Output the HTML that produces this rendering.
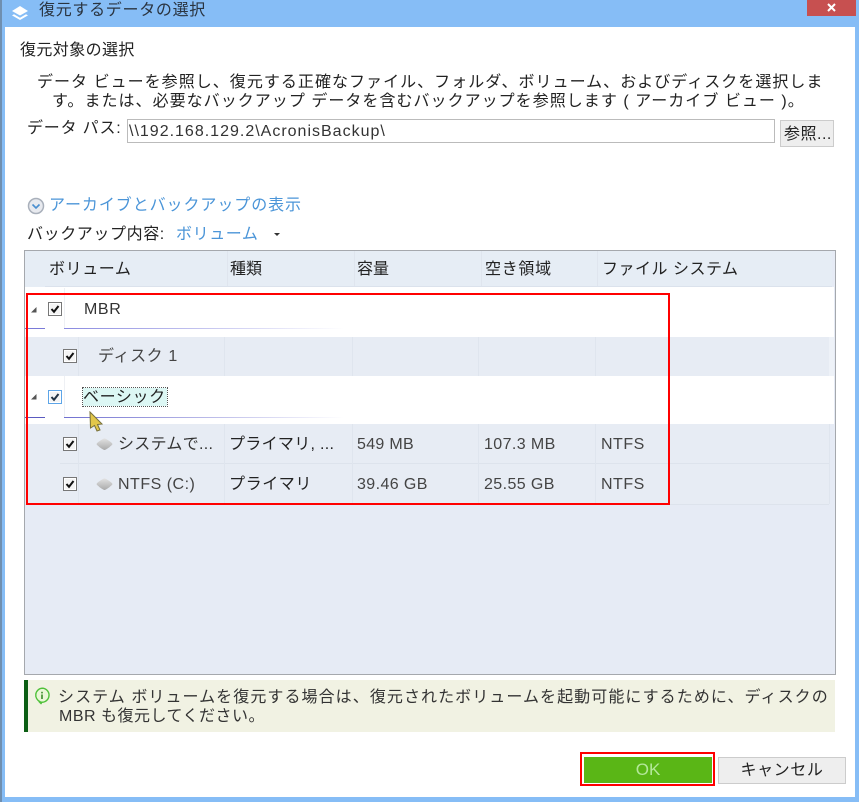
<!DOCTYPE html>
<html lang="ja">
<head>
<meta charset="utf-8">
<style>
html,body{margin:0;padding:0;}
body{position:relative;width:859px;height:802px;overflow:hidden;background:#86bdf6;font-family:"Liberation Sans","Noto Sans CJK JP",sans-serif;color:#222;}
div,span{position:absolute;white-space:nowrap;}
.t{font-size:16px;line-height:20px;}
.vl{width:1px;background:#dfe5ee;}
.hl{height:1px;background:#dde3ec;}
.cb{width:12px;height:12px;border:1px solid #777;background:#f4f4f4;box-shadow:inset 0 0 0 1px #fff;}
.cb svg{position:absolute;left:0;top:0;}
</style>
</head>
<body>
<!-- window -->
<div style="left:0;top:0;width:2px;height:802px;background:#6f8fb0"></div>
<div style="left:5px;top:27px;width:850px;height:771px;background:#fff"></div>
<svg style="position:absolute;left:11px;top:5px" width="18" height="16" viewBox="0 0 18 16"><path d="M9 1L17 6 9 10.5 1 6z" fill="#fff"/><path d="M3 9.2L9 12.8 15 9.2 17 10.4 9 15 1 10.4z" fill="#fff"/></svg>
<div class="t" style="left:39px;top:1px;letter-spacing:.7px;color:#2a3440">復元するデータの選択</div>
<div style="left:807px;top:0;width:49px;height:16px;background:#c75050"></div>
<svg style="position:absolute;left:827px;top:3px" width="9" height="9" viewBox="0 0 9 9"><path d="M1 1L8 8M8 1L1 8" stroke="#fff" stroke-width="2"/></svg>

<div class="t" style="left:20px;top:41px;letter-spacing:.4px">復元対象の選択</div>
<div class="t" style="left:37px;top:73px;letter-spacing:1.03px">データ ビューを参照し、復元する正確なファイル、フォルダ、ボリューム、およびディスクを選択しま</div>
<div class="t" style="left:52px;top:92px;letter-spacing:1.03px">す。または、必要なバックアップ データを含むバックアップを参照します ( アーカイブ ビュー )。</div>
<div class="t" style="left:27px;top:119px;letter-spacing:.8px">データ パス:</div>
<div style="left:127px;top:119px;width:646px;height:22px;border:1px solid #bbb;background:#fff"></div>
<div class="t" style="left:129px;top:122px;letter-spacing:1px;color:#333">\\192.168.129.2\AcronisBackup\</div>
<div style="left:780px;top:120px;width:52px;height:25px;border:1px solid #ccc;background:#eee"></div>
<div class="t" style="left:784px;top:125px;letter-spacing:.5px">参照...</div>

<svg style="position:absolute;left:27px;top:197px" width="18" height="18" viewBox="0 0 18 18"><circle cx="9" cy="9" r="7.5" fill="#e8eaef" stroke="#a9b0bb" stroke-width="1.5"/><path d="M5.5 7.5L9 11 12.5 7.5" fill="none" stroke="#4a8fd0" stroke-width="1.6"/></svg>
<div class="t" style="left:49px;top:196px;color:#4b95d8;letter-spacing:.93px">アーカイブとバックアップの表示</div>
<div class="t" style="left:27px;top:225px;letter-spacing:.6px">バックアップ内容:</div>
<div class="t" style="left:176px;top:225px;color:#4b95d8;letter-spacing:.6px">ボリューム</div>
<div style="left:274px;top:233px;width:0;height:0;border-left:3px solid transparent;border-right:3px solid transparent;border-top:3px solid #333"></div>

<!-- table -->
<div style="left:24px;top:250px;width:810px;height:423px;border:1px solid #a5a8ad;background:#e6ebf5"></div>
<div style="left:25px;top:251px;width:807px;height:36px;background:#e6edf5"></div>
<div style="left:45px;top:286px;width:787px;height:1px;background:#dbe2ec"></div>
<div class="vl" style="left:227px;top:251px;height:35px"></div>
<div class="vl" style="left:354px;top:251px;height:35px"></div>
<div class="vl" style="left:481px;top:251px;height:35px"></div>
<div class="vl" style="left:597px;top:251px;height:35px"></div>
<div class="t" style="left:49px;top:260px;letter-spacing:.6px">ボリューム</div>
<div class="t" style="left:230px;top:260px">種類</div>
<div class="t" style="left:357px;top:260px">容量</div>
<div class="t" style="left:485px;top:260px;letter-spacing:.7px">空き領域</div>
<div class="t" style="left:602px;top:260px;letter-spacing:.5px">ファイル システム</div>

<!-- rows bg -->
<div style="left:25px;top:287px;width:809px;height:50px;background:#fff"></div>
<div style="left:25px;top:337px;width:804px;height:39px;background:#e7ecf4"></div>
<div style="left:25px;top:376px;width:809px;height:48px;background:#fff"></div>
<div style="left:25px;top:424px;width:804px;height:80px;background:#e7ecf4"></div>
<div style="left:829px;top:337px;width:5px;height:39px;background:#eef2f8"></div>
<div style="left:829px;top:424px;width:1px;height:80px;background:#dfe5ee"></div>
<div class="hl" style="left:25px;top:504px;width:804px"></div>
<div class="hl" style="left:60px;top:463px;width:769px"></div>
<div class="vl" style="left:78px;top:337px;height:39px"></div>
<div class="vl" style="left:78px;top:424px;height:80px"></div>
<div class="vl" style="left:224px;top:337px;height:39px"></div>
<div class="vl" style="left:352px;top:337px;height:39px"></div>
<div class="vl" style="left:478px;top:337px;height:39px"></div>
<div class="vl" style="left:595px;top:337px;height:39px"></div>
<div class="vl" style="left:224px;top:424px;height:80px"></div>
<div class="vl" style="left:352px;top:424px;height:80px"></div>
<div class="vl" style="left:478px;top:424px;height:80px"></div>
<div class="vl" style="left:595px;top:424px;height:80px"></div>
<div style="left:64px;top:288px;width:1px;height:40px;background:#eef0f4"></div>
<div style="left:64px;top:376px;width:1px;height:41px;background:#eef0f4"></div>

<!-- group underlines -->
<div style="left:25px;top:328px;width:20px;height:1px;background:#7a7ad8"></div>
<div style="left:64px;top:328px;width:280px;height:1px;background:linear-gradient(90deg,#8a8ae0,#fff)"></div>
<div style="left:25px;top:417px;width:20px;height:1px;background:#5a5ac0"></div>
<div style="left:64px;top:417px;width:280px;height:1px;background:linear-gradient(90deg,#7070d0,#fff)"></div>

<!-- triangles -->
<svg style="position:absolute;left:30px;top:306px" width="8" height="8"><path d="M6.5 1V6.5H1z" fill="#555"/></svg>
<svg style="position:absolute;left:30px;top:393px" width="8" height="8"><path d="M6.5 1V6.5H1z" fill="#555"/></svg>

<!-- checkboxes -->
<div class="cb" style="left:48px;top:302px"><svg width="12" height="12"><path d="M2.5 6L5 8.8 9.5 3" fill="none" stroke="#111" stroke-width="2"/></svg></div>
<div class="cb" style="left:63px;top:349px"><svg width="12" height="12"><path d="M2.5 6L5 8.8 9.5 3" fill="none" stroke="#111" stroke-width="2"/></svg></div>
<div class="cb" style="left:48px;top:390px;border-color:#5da5e8"><svg width="12" height="12"><path d="M2.5 6L5 8.8 9.5 3" fill="none" stroke="#234" stroke-width="2"/></svg></div>
<div class="cb" style="left:63px;top:437px"><svg width="12" height="12"><path d="M2.5 6L5 8.8 9.5 3" fill="none" stroke="#111" stroke-width="2"/></svg></div>
<div class="cb" style="left:63px;top:477px"><svg width="12" height="12"><path d="M2.5 6L5 8.8 9.5 3" fill="none" stroke="#111" stroke-width="2"/></svg></div>

<!-- row text -->
<div class="t" style="left:84px;top:300px;letter-spacing:.6px;color:#333">MBR</div>
<div class="t" style="left:98px;top:347px;letter-spacing:.6px;color:#444">ディスク 1</div>
<div style="left:83px;top:388px;width:84px;height:18px;background:#dcf7f4;outline:1px dotted #555"></div>
<div class="t" style="left:83px;top:388px;letter-spacing:.6px">ベーシック</div>
<svg style="position:absolute;left:89px;top:411px" width="16" height="22" viewBox="0 0 16 22"><path d="M1 1L13 13 8.5 13.5 11 19 8 20 5.5 14.5 1.5 17z" fill="#e3c74a" stroke="#77703a" stroke-width="1"/></svg>

<svg style="position:absolute;left:96px;top:437px" width="17" height="14" viewBox="0 0 17 14"><defs><linearGradient id="d" x1="0" y1="0" x2="0" y2="1"><stop offset="0" stop-color="#e2e2e2"/><stop offset="1" stop-color="#aaa"/></linearGradient></defs><path d="M8.5 1.5C10 1.5 16 5.5 16.5 7C16 8.5 10 13 8.5 13C7 13 1 8.5.5 7C1 5.5 7 1.5 8.5 1.5Z" fill="url(#d)"/></svg>
<svg style="position:absolute;left:96px;top:477px" width="17" height="14" viewBox="0 0 17 14"><path d="M8.5 1.5C10 1.5 16 5.5 16.5 7C16 8.5 10 13 8.5 13C7 13 1 8.5.5 7C1 5.5 7 1.5 8.5 1.5Z" fill="url(#d)"/></svg>
<div class="t" style="left:118px;top:435px;letter-spacing:.3px;color:#333">システムで...</div>
<div class="t" style="left:118px;top:475px;letter-spacing:.5px;color:#444">NTFS (C:)</div>
<div class="t" style="left:229px;top:435px;letter-spacing:.3px">プライマリ, ...</div>
<div class="t" style="left:229px;top:475px;letter-spacing:.6px">プライマリ</div>
<div class="t" style="left:357px;top:435px;letter-spacing:.3px;color:#444">549 MB</div>
<div class="t" style="left:357px;top:475px;letter-spacing:.4px;color:#444">39.46 GB</div>
<div class="t" style="left:484px;top:435px;letter-spacing:.4px;color:#444">107.3 MB</div>
<div class="t" style="left:484px;top:475px;letter-spacing:.4px;color:#444">25.55 GB</div>
<div class="t" style="left:601px;top:435px;color:#444;letter-spacing:.5px">NTFS</div>
<div class="t" style="left:601px;top:475px;color:#444;letter-spacing:.5px">NTFS</div>

<!-- red box -->
<div style="left:26px;top:293px;width:640px;height:208px;border:2px solid #f00"></div>

<!-- info -->
<div style="left:24px;top:680px;width:811px;height:52px;background:#f1f2e3"></div>
<div style="left:24px;top:680px;width:4px;height:52px;background:#0b5e14"></div>
<svg style="position:absolute;left:33px;top:687px" width="18" height="18" viewBox="0 0 18 18"><path d="M9 1.2a7 7 0 1 1-3.2 13.2L8.5 17 7 14.6A7 7 0 0 1 9 1.2z" fill="#eaf7d8" stroke="#4fc13a" stroke-width="1.4"/><rect x="8.2" y="7.5" width="1.6" height="4.5" fill="#3a8a2a"/><rect x="8.2" y="4.8" width="1.6" height="1.6" fill="#3a8a2a"/></svg>
<div class="t" style="left:58px;top:688px;letter-spacing:1.07px;color:#333">システム ボリュームを復元する場合は、復元されたボリュームを起動可能にするために、ディスクの</div>
<div class="t" style="left:59px;top:707px;letter-spacing:.5px;color:#333">MBR も復元してください。</div>

<!-- buttons -->
<div style="left:580px;top:752px;width:131px;height:30px;border:2px solid #f00"></div>
<div style="left:584px;top:757px;width:128px;height:26px;background:#5ab616;text-align:center;color:#b4e89a;font-size:17px;line-height:26px">OK</div>
<div style="left:718px;top:757px;width:126px;height:25px;border:1px solid #ccc;background:#eee"></div>
<div class="t" style="left:718px;top:761px;width:128px;text-align:center;letter-spacing:.6px">キャンセル</div>

<div style="left:5px;top:797px;width:850px;height:5px;background:#86bdf6"></div>
</body>
</html>
